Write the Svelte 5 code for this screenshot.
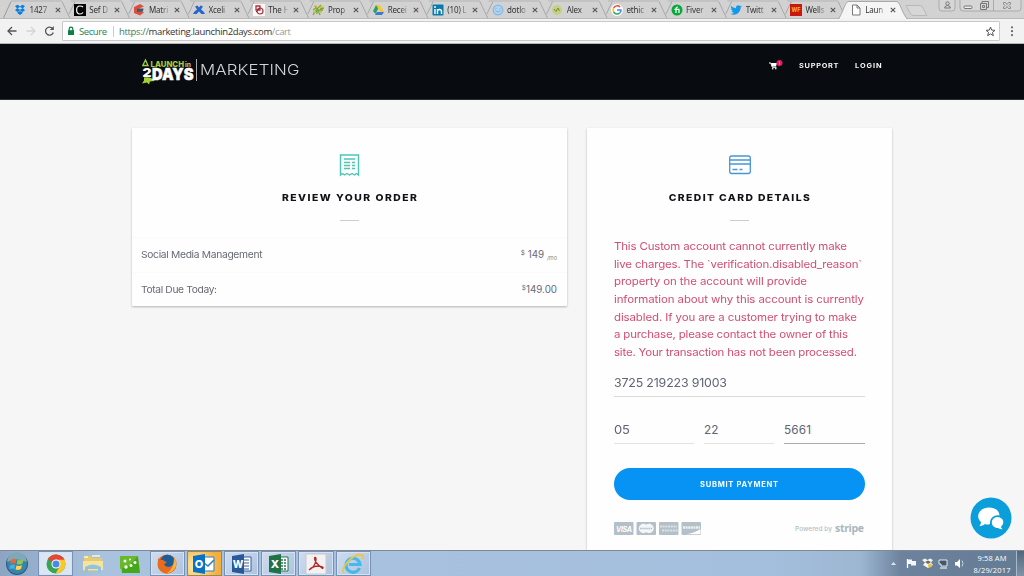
<script>
  const tabs = [
    ['dropbox', '1427'], ['c', 'Sef D'], ['matrix', 'Matri'], ['xcel', 'Xceli'], ['rings', 'The H'],
    ['prop', 'Prop'], ['drive', 'Recei'], ['linkedin', '(10) L'], ['smile', 'dotlo'], ['alex', 'Alex'],
    ['google', 'ethic'], ['fiverr', 'Fiver'], ['twitter', 'Twitt'], ['wells', 'Wells'], ['page', 'Laun']
  ];
  const pitch = 59.7;
  const error = [
    ['This Custom account cannot currently make', 233],
    ['live charges. The `verification.disabled_reason`', 248],
    ['property on the account will provide', 193],
    ['information about why this account is currently', 250],
    ['disabled. If you are a customer trying to make', 243],
    ['a purchase, please contact the owner of this', 234],
    ['site. Your transaction has not been processed.', 243]
  ];
  const apps = ['chrome', 'folder', 'green', 'firefox', 'outlook', 'word', 'excel', 'pdf', 'ie'];

  // Tracks text so that its line takes the given width, with glyphs widened by the stretch factor.
  function fit(node, [width, stretch = 1]) {
    const natural = node.getBoundingClientRect().width;
    const space = (width / stretch - natural) / (node.textContent.length - 1);
    node.style.letterSpacing = space + 'px';
    node.style.marginRight = -space + 'px';
    if (stretch !== 1) node.style.transform = `scaleX(${stretch})`;
  }
</script>

<div class="screen">
  <div class="tabstrip">
    <svg class="shapes" width="1024" height="19">
      <path d="M3 19L11 1.5" stroke="#999" fill="none" />
      {#each tabs.slice(0, 14) as _, i}
        <path d="M{62 + i * pitch} 1.5L{70 + i * pitch} 18.5M{75 + i * pitch} 1.5L{69 + i * pitch} 14" stroke="#a8a8a8" fill="none" />
        <path d="M{11 + i * pitch} 1H{62 + i * pitch}" stroke="#b4b4b4" />
      {/each}
      <path d="M0 18.5H1024" stroke="#b9b9b9" />
      <path d="M838 19C841 18 845 2 848 1.5H897C900 2 904 18 908 19Z" fill="#f5f5f5" stroke="#aaa" />
      <path d="M840 19H906" stroke="#f5f5f5" stroke-width="2" />
      <path d="M906 5.5H920Q922 5.5 923 8L927 15.5H914Q911 15.5 910 13Z" fill="#d7d7d7" stroke="#b8b8b8" />
      <path d="M939 0V8Q939 11 942 11H952Q955 11 955 8V0M960 0V8Q960 11 963 11H1018Q1021 11 1021 8V0M993.5 0V11" fill="#d6d6d6" stroke="#aaa" />
      <g fill="none" stroke="#777">
        <circle cx="947.500" cy="3.500" r="1.700" /><path d="M944.500 8Q945 5.500 947.500 5.500T950.500 8Z" />
        <rect x="964" y="6" width="8" height="2.500" rx="1" fill="#eee" />
        <path d="M982 3.500V1.500H988.500V7.500H986.500M980.500 3.500H986.500V9.500H980.500ZM982.500 5.500H984.500V7.500H982.500Z" />
        <path d="M1003.500 2.500H1005.500L1007 4.500L1008.500 2.500H1010.500V4L1009 5.500L1010.500 7V8.500H1008.500L1007 6.500L1005.500 8.500H1003.500V7L1005 5.500L1003.500 4Z" stroke="#8c8c8c" />
      </g>
    </svg>
    <div class="tabs">
      {#each tabs as [icon, label]}
        <div class="tab">
          <svg class="fav" viewBox="0 0 12 12">
            {#if icon === 'dropbox'}<path d="M1 2L3.700 .7L6 2.500L8.300 .7L11 2L9 4.200L11 6.300L8.300 8L6 6.200L3.700 8L1 6.300L3 4.200ZM3 8.700L6 7L9 8.700L6 11Z" fill="#087ee0" /><path d="M3.500 4.200L6 2.900L8.500 4.200L6 5.700Z" fill="#d5d5d5" />
            {:else if icon === 'c'}<path d="M0 0H12V12H0Z" fill="#050505" /><path d="M9 3Q8 2 6 2C1.500 2 1.500 10 6 10Q8 10 9 8.500" fill="none" stroke="#fff" stroke-width="1.200" />
            {:else if icon === 'matrix'}<path d="M1 3L7 0L11 2.500L5 5L11 8.500L7 11.500L1 9Z" fill="#e04c3e" /><path d="M4 4.500L10.500 4.500L10 7.500L4 8Z" fill="#375f65" />
            {:else if icon === 'xcel'}<path d="M2 2.500L4.500 1.500L6 3.500L7.500 1.500L10 2.500L8 5.500Q11 7 12 10H8.500L6 7.500L3.500 10H0Q1 7 4 5.500Z" fill="#2865cc" />
            {:else if icon === 'rings'}<path d="M0 0H12V12H0Z" fill="#faf7f7" /><path d="M3 2H7V6H3Z" fill="none" stroke="#c12b3b" stroke-width="1.300" /><circle cx="7" cy="7" r="3" fill="none" stroke="#a63447" stroke-width="1.200" /><path d="M3 8L7 4" stroke="#544" />
            {:else if icon === 'prop'}<path d="M1 11L5 5L3 2M5 10V5L9 1M8 11L6 6H11M1 6L4 4M8 5L12 4" fill="none" stroke="#79a83a" stroke-width="1.300" /><path d="M2 2H5M8 3H11M7 8H10M1 8H4" stroke="#dcb830" stroke-width="1.500" />
            {:else if icon === 'drive'}<path d="M4 1H8L3.500 10L1 7Z" fill="#23a566" /><path d="M4 1H8L12 8H8.500Z" fill="#f7c831" /><path d="M3 11L5 8H12L10 11Z" fill="#3b78d8" />
            {:else if icon === 'linkedin'}<rect x=".5" y=".5" width="11" height="11" rx="1" fill="#087bac" /><path d="M3 5V10M3 2V4M5.500 10V5M5.500 7.500Q5.500 5.500 7.500 5.500T9.500 7.500V10" fill="none" stroke="#fff" stroke-width="1.400" />
            {:else if icon === 'smile'}<circle cx="6" cy="6" r="5.500" fill="#8bbce5" /><circle cx="6" cy="6" r="4" fill="#b0d3ef" /><path d="M3.500 6.500Q6 9.500 8.500 6.500M4 4V5M8 4V5" fill="none" stroke="#7fb1dc" />
            {:else if icon === 'alex'}<circle cx="6" cy="6" r="5" fill="#c6d083" /><path d="M3 5L5 7.500L7 4L8.500 7" fill="none" stroke="#7d8a42" />
            {:else if icon === 'google'}<circle cx="6" cy="6" r="6" fill="#fff" /><g fill="none" stroke-width="1.500"><path d="M9 3A4 4 0 0 0 2.600 4" stroke="#e94335" /><path d="M2.600 4A4 4 0 0 0 2.600 8" stroke="#fbbc05" /><path d="M2.600 8A4 4 0 0 0 8.700 9" stroke="#34a853" /><path d="M8.700 9Q10 8 10 6H6" stroke="#4285f4" /></g>
            {:else if icon === 'fiverr'}<circle cx="6" cy="6" r="5.500" fill="#08a83b" /><path d="M5 9V4.500Q5 3 7 3M3.500 5.300H8V9" fill="none" stroke="#fff" stroke-width="1.200" />
            {:else if icon === 'twitter'}<path d="M1 2Q3 4 6 4.300C5.500 1 9 .5 10 2L11.800 1.700L10.700 3.500C10.500 9 5 12.500 .5 9.800Q3 10 4 8.800Q2 8.500 1.800 7H3Q1 6 1 4.500L2 4.800Q.5 3.500 1 2Z" fill="#1499e8" />
            {:else if icon === 'wells'}<path d="M0 0H12V12H0Z" fill="#c9180e" /><text x="6" y="8" text-anchor="middle" font-size="5.500" font-weight="700" fill="#ffb43b">WF</text>
            {:else}<path d="M2.500 1H7L10 4V11H2.500ZM7 1V4H10" fill="#fff" stroke="#777" />{/if}
          </svg>
          <span class="title">{label}</span>
          <svg class="close" viewBox="0 0 6 6"><path d="M.8 .8L5.200 5.200M5.200 .8L.8 5.200" stroke="#555" stroke-width="1.100" /></svg>
        </div>
      {/each}
    </div>
  </div>

  <div class="toolbar">
    <svg width="62" height="24" fill="none">
      <path d="M16.500 12H8.500M12 8L8 12L12 16" stroke="#555" stroke-width="1.300" />
      <path d="M26.500 12H34.500M31 8L35 12L31 16" stroke="#d4d4d4" stroke-width="1.300" />
      <path d="M52.500 9.500A4 4 0 1 0 53.300 13.500" stroke="#555" stroke-width="1.300" /><path d="M53.800 7V11H49.800Z" fill="#555" />
    </svg>
    <div class="address">
      <svg width="8" height="10" viewBox="0 0 8 10"><path d="M2.200 5V3A1.800 1.800 0 0 1 5.800 3V5" fill="none" stroke="#0b8043" stroke-width="1.200" /><rect x="1" y="4.200" width="6" height="4.800" fill="#0b8043" /></svg>
      <span class="secure"><span class="run" use:fit={[28]}>Secure</span></span>
      <i></i>
      <span class="url"><span class="run" use:fit={[172]}><em>https://</em>marketing.launchin2days.com<b>/cart</b></span></span>
      <svg class="star" width="11" height="11" viewBox="0 0 11 11"><path d="M5.500 1L6.700 4.100L10 4.300L7.500 6.400L8.300 9.700L5.500 7.900L2.700 9.700L3.500 6.400L1 4.300L4.300 4.100Z" fill="none" stroke="#555" /></svg>
    </div>
    <svg class="dots" width="24" height="24" fill="#666"><circle cx="12" cy="8.300" r="1.100" /><circle cx="12" cy="12.200" r="1.100" /><circle cx="12" cy="16.100" r="1.100" /></svg>
  </div>

  <header>
    <div class="brand">
      <svg class="mark" width="55" height="28" viewBox="0 0 55 28">
        <path d="M1.500 8L4.500 2L7 7.500H2Z" fill="none" stroke="#a5ce39" stroke-width="1.300" />
        <path d="M3 19.500Q11 18.500 13.500 23L9 23.500L8 26.500L6 24.500L1 25.500L3 22.500Z" fill="#a5ce39" />
        <text x="9.500" y="9" font-size="8" font-weight="800" fill="#a5ce39" textLength="33.500" lengthAdjust="spacingAndGlyphs">LAUNCH</text>
        <text x="44" y="9" font-size="6" font-weight="700" fill="#b8c99b" textLength="6" lengthAdjust="spacingAndGlyphs">in</text>
        <g fill="#fff" font-weight="900"><text x="1.500" y="18.500" font-size="12" textLength="9" lengthAdjust="spacingAndGlyphs">2</text><text x="11" y="22" font-size="16" textLength="41.500" lengthAdjust="spacingAndGlyphs" stroke="#fff" stroke-width=".5">DAYS</text></g>
      </svg>
      <div class="name"><span class="run" use:fit={[99.5, 1.12]}>MARKETING</span></div>
    </div>
    <nav>
      <svg width="14" height="12" viewBox="0 0 14 12"><path d="M0 3H1.800L3.400 7.300H7.500" fill="none" stroke="#fff" /><path d="M2 3H8L7 6.500H3Z" fill="#fff" /><circle cx="3.700" cy="8.800" r=".8" fill="#fff" /><circle cx="6.800" cy="8.800" r=".8" fill="#fff" /><circle cx="10.500" cy="3" r="3" fill="#e61d5d" /><path d="M10.500 1.500V4.500" stroke="#f88bae" stroke-width=".8" /></svg>
      <span class="support"><span class="run" use:fit={[39.5, 1.08]}>SUPPORT</span></span>
      <span class="login"><span class="run" use:fit={[26.5, 1.08]}>LOGIN</span></span>
    </nav>
  </header>

  <main>
    <section class="card order">
      <svg class="glyph" width="24" height="26" viewBox="0 0 24 26" fill="none" stroke="#4bc6b4" stroke-width="1.400"><path d="M2.500 3H20.500V23L18.500 21.500L16.500 23L14 21.500L11.500 23L9 21.500L6.500 23L4.500 21.500L2.500 23Z" /><path d="M6 7H17M6 10.500H12M14 10.500H17M6 13.500H12M14 13.500H17M6 16.500H12M14 16.500H17" stroke-width="1.300" /></svg>
      <h2><span class="run mid" use:fit={[135, 1.08]}>REVIEW YOUR ORDER</span></h2>
      <hr />
      <div class="row first"><span class="run" use:fit={[121.5, 1.08]}>Social Media Management</span><span class="price"><sup>$</sup> 149 <sub>/mo</sub></span></div>
      <div class="row"><span class="run" use:fit={[76, 1.08]}>Total Due Today:</span><span class="price"><sup>$</sup>149.00</span></div>
    </section>

    <section class="card payment">
      <svg class="glyph" width="24" height="26" viewBox="0 0 24 26" fill="none" stroke="#4a97d3" stroke-width="1.300"><rect x="1.700" y="4" width="20.600" height="17.500" rx="2" /><path d="M2 8H22M2 12H22" /><path d="M4.500 17.500H9.500M11.500 17.500H14.500" /></svg>
      <h2><span class="run mid" use:fit={[141, 1.08]}>CREDIT CARD DETAILS</span></h2>
      <hr />
      <p>{#each error as [line, width]}<span class="line"><span class="run" use:fit={[width, 1.06]}>{line}</span></span>{/each}</p>
      <div class="field number"><span class="run" use:fit={[113, 1.05]}>3725 219223 91003</span></div>
      <div class="fields">
        <div class="field"><span class="run" use:fit={[16, 1.1]}>05</span></div>
        <div class="field"><span class="run" use:fit={[14.5]}>22</span></div>
        <div class="field focus"><span class="run" use:fit={[27]}>5661</span></div>
      </div>
      <button><span class="run mid" use:fit={[78, 1.08]}>SUBMIT PAYMENT</span></button>
      <div class="foot">
        <svg width="88" height="14" viewBox="0 0 88 14">
          <g fill="#b4c0c8"><rect width="19.500" height="13" rx="1" /><rect x="22.500" width="19.500" height="13" rx="1" /><rect x="45" width="19.500" height="13" rx="1" /><rect x="67.500" width="19.500" height="13" rx="1" /></g>
          <text x="2" y="9.500" font-size="7" font-weight="700" font-style="italic" fill="#fff" textLength="16">VISA</text>
          <circle cx="29.500" cy="6.500" r="4.700" fill="#f4f6f7" /><circle cx="35" cy="6.500" r="4.700" fill="#f4f6f7" /><path d="M26 6.500H38.500" stroke="#b4c0c8" stroke-width="1.600" stroke-dasharray="1.500 .6" />
          <path d="M46 4.500H63M48 8.500H64" stroke="#dce2e6" stroke-width="2" stroke-dasharray="2 .7" />
          <path d="M69 5.500H86" stroke="#eef1f3" stroke-width="2.300" stroke-dasharray="2 .6" /><path d="M72 12.300Q81 11 86.500 7V12.300Z" fill="#fff" />
        </svg>
        <span class="powered"><span class="run" use:fit={[37]}>Powered by</span></span><span class="stripe"><span class="run" use:fit={[29]}>stripe</span></span>
      </div>
    </section>
  </main>

  <svg class="chat" width="42" height="42" viewBox="0 0 42 42"><circle cx="21" cy="21" r="20.500" fill="#0a9edb" /><path d="M19 10.500C26 10.500 29.500 14.500 29.500 18.500C24 17.500 19.500 21.500 20 27C18 28 16.500 27.500 15 27C13 28.500 11.500 29 9.500 29Q11 27.500 11 25C5 20 9 10.500 19 10.500Z" fill="#fff" /><path d="M27 20C34 20 35 27 31 29.500Q31 31 32.500 32Q30 32.500 28 31C20.500 31 19.500 21 27 20Z" fill="#fff" /></svg>

  <footer>
    <div class="start"><svg width="24" height="24" viewBox="0 0 24 24"><circle cx="12" cy="12" r="11" fill="#285d83" /><circle cx="12" cy="12" r="10" fill="#3c83aa" /><path d="M2 10A10 10 0 0 1 22 10Q12 5 2 10" fill="#7fa8b8" /><path d="M6 8Q9 6 11.300 7.300L10.500 11.500Q8 10.500 5.300 12Z" fill="#f0642d" /><path d="M12.500 7.700Q15 9 18.500 7.500L17.500 11.500Q14 13 11.700 12Z" fill="#92c94b" /><path d="M5 13.500Q7.500 12 10.200 13L9.300 17Q7 16 4.500 17Z" fill="#41b2e9" /><path d="M11.500 13.500Q14 14.500 17 13L16 17Q13 18.500 10.500 17.500Z" fill="#ffd34c" /></svg></div>
    {#each apps as app}
      <div class="app {app}">
        <svg width="22" height="22" viewBox="0 0 22 22">
          {#if app === 'chrome'}<circle cx="11" cy="11" r="9.500" fill="#36a454" /><path d="M11 11L2.800 6.200A9.500 9.500 0 0 1 19.500 6.800Z" fill="#e34737" /><path d="M11 11V6.800H19.500A9.500 9.500 0 0 1 10.500 20.500L15 13Z" fill="#fbc72f" /><circle cx="11" cy="11" r="4.500" fill="#fff" /><circle cx="11" cy="11" r="3.500" fill="#428aee" />
          {:else if app === 'folder'}<path d="M2 3H9L10 5H20V18H2Z" fill="#e4ca72" /><path d="M1 8H21V17H1Z" fill="#f5e59b" /><path d="M2 4H6M10 3H18" stroke="#fff7c8" stroke-width="1.500" /><path d="M3 20V14Q11 9 19 14V20H16V16H6V20Z" fill="#8fc2e5" />
          {:else if app === 'green'}<path d="M1 3H19L21 20H3Z" fill="#45a817" /><path d="M1 3H19L11 12L1 16Z" fill="#66b92a" /><g fill="#fff"><circle cx="6" cy="8" r="1.500" /><circle cx="11" cy="6.500" r="1" /><circle cx="7" cy="14" r="1.700" /><circle cx="12" cy="12.500" r="1.500" /><circle cx="16" cy="9.500" r="1.500" /></g>
          {:else if app === 'firefox'}<circle cx="11" cy="11" r="9.500" fill="#e5641a" /><circle cx="11.500" cy="8.800" r="7" fill="#1c5d99" /><path d="M2 5Q4 8 7 6.500L8 8L11 9L8 11.500Q11 16 17 12L20 7Q22 19 11 20.500Q1 20 2 5Z" fill="#e96b1c" /><path d="M18 5Q22 10 19 15Q16 20 11 20Q18 16 18 5Z" fill="#f9b23b" />
          {:else if app === 'outlook'}<path d="M10 4H21V18H10Z" fill="#fff" stroke="#287bc1" /><path d="M11 10L15 13L21 7" fill="none" stroke="#287bc1" stroke-width="1.500" /><path d="M0 3L12 1V21L0 19Z" fill="#0872c6" /><text x="6" y="15" text-anchor="middle" font-size="11" font-weight="800" fill="#fff">O</text>
          {:else if app === 'word'}<path d="M10 4H20V18H10Z" fill="#fff" stroke="#315e9f" /><path d="M12 7H18M12 10H18M12 13H18M12 16H18" stroke="#315e9f" /><path d="M1 3L13 1V21L1 19Z" fill="#28579a" /><text x="7" y="14.500" text-anchor="middle" font-size="10" font-weight="800" fill="#fff">W</text>
          {:else if app === 'excel'}<path d="M10 4H20V18H10Z" fill="#fff" stroke="#23774a" /><path d="M12 7H18M12 10H18M12 13H18M12 16H18" stroke="#23774a" stroke-width="1.500" stroke-dasharray="3 1" /><path d="M1 3L13 1V21L1 19Z" fill="#1f7246" /><text x="7" y="15" text-anchor="middle" font-size="11" font-weight="800" fill="#fff">X</text>
          {:else if app === 'pdf'}<path d="M1 1H21V21H1Z" fill="#f3f2f2" stroke="#c9c9ce" /><path d="M4 17Q10 14 11 7Q11 3 9.500 5Q9 9 17.500 15.500Q20 14 13 13Q8 13 4 17" fill="none" stroke="#b52b2b" stroke-width="1.300" />
          {:else}<path d="M17.500 15A7 7 0 1 1 18 11.500H7" fill="none" stroke="#48b8e8" stroke-width="3.200" /><path d="M2 20C-3 16 12 -1 20 2Q22 3 20 6" fill="none" stroke="#edc83b" stroke-width="1.700" />{/if}
        </svg>
      </div>
    {/each}
    <svg class="tray" width="80" height="26" viewBox="0 0 80 26">
      <path d="M2 14L4.500 11L7 14Z" fill="#dce8f1" />
      <path d="M18.500 8V17" stroke="#fff" stroke-width="1.300" /><path d="M19 8.500H23V10H27V14.500H22V13H19Z" fill="#f3f6fa" />
      <path d="M33 9L36 7.500L38.500 9L41 7.500L44 9L42 11.500L44 14L39 17L34 14L36 11.500Z" fill="#f3f5ef" /><path d="M36 11L39 9.500L42 11L39 13Z" fill="#686d62" /><circle cx="41" cy="14.500" r="2" fill="#e6c33e" />
      <path d="M50 9H58V15H52V13H50Z" fill="#43566c" stroke="#e4e9ee" /><path d="M51 17H58" stroke="#fff" />
      <path d="M66 11H68L71 8V17L68 14.500H66Z" fill="#fff" /><path d="M73 9.500Q75 12.500 73 15.500" fill="none" stroke="#c7d2df" />
    </svg>
    <div class="clock"><span><span class="run" use:fit={[29]}>9:58 AM</span></span><span><span class="run" use:fit={[37]}>8/29/2017</span></span></div>
    <div class="peek"></div>
  </footer>
</div>

<style>
  :global(body) { margin: 0; overflow: hidden; }
  * { box-sizing: border-box; }
  .screen { width: 1024px; height: 576px; position: relative; display: flex; flex-direction: column; overflow: hidden; background: #f6f6f6; font-family: Inter, "Liberation Sans", sans-serif; }
  .screen > * { flex-shrink: 0; }
  .run { display: inline-block; white-space: pre; transform-origin: left; }
  .mid { transform-origin: center; }
  .tabstrip { height: 19px; background: #d2d2d2; position: relative; }
  .shapes { position: absolute; inset: 0; }
  .tabs { position: relative; display: flex; padding-left: 14px; height: 19px; }
  .tab { width: 59.7px; display: flex; align-items: center; flex-shrink: 0; padding-top: 1px; }
  .fav { width: 12px; height: 12px; margin-right: 3.500px; flex: none; }
  .title { width: 20px; overflow: hidden; white-space: nowrap; font: 8px/12px "Noto Sans", "Open Sans", sans-serif; letter-spacing: -.15px; color: #333; margin-top: -1px; -webkit-mask-image: linear-gradient(90deg, #000 60%, #0003); mask-image: linear-gradient(90deg, #000 60%, #0003); }
  .close { width: 6px; height: 6px; margin-left: 5px; flex: none; }
  .toolbar { height: 25px; background: #f2f2f2; border-bottom: 1px solid #b6b6b6; display: flex; align-items: flex-start; }
  .address { width: 938px; height: 20px; margin-top: 2px; background: #fff; border: 1px solid #c9c9c9; border-radius: 1px; display: flex; align-items: center; padding: 0 4px; font: 9.500px "Open Sans", sans-serif; }
  .secure { color: #208554; margin-left: 4px; width: 28px; }
  .address i { width: 1px; height: 11px; background: #ccc; margin: 0 5px 0 6px; }
  .url { color: #333; }
  .url em { color: #417b59; font-style: normal; }
  .url b { color: #999; font-weight: 400; }
  .star { margin-left: auto; margin-right: -1px; }
  header { height: 56px; background: #080c11; border-bottom: 1px solid #2b2e33; display: flex; align-items: flex-start; justify-content: space-between; padding: 0 143px 0 141px; }
  .brand { display: flex; padding-top: 14px; }
  .name { height: 22px; width: 105px; margin-top: 1px; padding-left: 3px; border-left: 1px solid #aaa; color: #d2d5d7; font-size: 15px; line-height: 22px; font-weight: 300; }
  nav { display: flex; align-items: center; padding-top: 14px; height: 29px; color: #f5f5f5; font-size: 6.800px; font-weight: 700; }
  .support { margin-left: 16px; width: 39.500px; }
  .login { margin-left: 16.500px; width: 26.500px; }
  main { display: flex; align-items: flex-start; gap: 20px; padding: 28px 0 0 132px; height: 450px; }
  .card { background: #fefefe; box-shadow: 0 1px 2px #0004; display: flex; flex-direction: column; align-items: center; }
  .order { width: 435px; height: 178px; }
  .payment { width: 305px; height: 460px; padding: 0 27px; }
  .glyph { margin-top: 24px; flex: none; }
  h2 { margin: 11px 0 0; height: 16px; line-height: 17px; font-size: 9.600px; font-weight: 800; color: #101217; }
  h2, hr { position: relative; left: -.5px; }
  hr { width: 19px; border: 0; height: 1px; background: #ccc; margin: 15px 0 0; flex: none; }
  .row { width: 100%; height: 35px; display: flex; justify-content: space-between; align-items: center; padding: 0 10px 0 9px; font-size: 9.500px; color: #686b75; font-weight: 400; border-top: 1px solid #fafafa; }
  .first { margin-top: 16px; }
  .price { white-space: nowrap; font-size: 9.800px; }
  .row sup { font-size: 6.500px; line-height: 0; vertical-align: 3px; }
  .row sub { font-size: 5.500px; line-height: 0; vertical-align: -2px; color: #888; }
  p { width: 251px; margin: 17px 0 0; color: #d24d72; font-size: 10.800px; line-height: 17.650px; }
  .line { display: block; height: 17.650px; }
  .field { border-bottom: 1px solid #dadadd; height: 31px; line-height: 35px; font-size: 11.800px; color: #616475; }
  .number { width: 251px; height: 36px; line-height: 27px; padding-top: 9px; }
  .fields { width: 251px; display: grid; grid-template-columns: 80px 70px 81px; gap: 10px; margin-top: 16px; }
  .fields .field { border-color: #e7dfe1; }
  .fields .field.focus { border-color: #a8abb1; }
  button { width: 251px; height: 32px; flex: none; margin-top: 24px; border: 0; border-radius: 16px; background: #0693f4; color: #fff; font: 700 7px Inter, sans-serif; }
  .foot { width: 251px; display: flex; align-items: center; margin-top: 21px; height: 16px; color: #b5bec6; }
  .powered { margin-left: auto; margin-right: 3px; font-size: 6.500px; font-weight: 500; }
  .stripe { width: 30px; font: 700 10.500px "Open Sans", sans-serif; color: #aab5bd; margin-top: -2px; }
  .chat { position: absolute; left: 970px; top: 497px; }
  footer { height: 26px; position: relative; z-index: 1; background: linear-gradient(90deg, #8da5c2, #a9c2de 10%, #a4bfdd 75%, #9db7d2 84%, #6d839d 88%, #647b94); border-top: 1px solid #7e8998; display: flex; align-items: center; }
  .start { width: 36px; display: flex; padding-left: 5px; }
  .app { width: 35.200px; height: 25px; margin-left: 2px; display: flex; align-items: center; justify-content: center; border: 1px solid transparent; }
  .chrome, .firefox, .word, .excel, .pdf, .ie { border-color: #7892b5; background: linear-gradient(135deg, #d0dcee, #adc3df); box-shadow: inset 0 0 0 1px #d6e2f1; }
  .chrome { background: #dce5f2; }
  .outlook { border-color: #a08653; background: radial-gradient(circle at 25% 60%, #fff0b4, #f2ae3e 80%); }
  .tray { margin-left: auto; }
  .clock { width: 42px; margin-left: 2px; margin-right: 3px; display: flex; flex-direction: column; align-items: center; font: 7.500px/12px "Open Sans", sans-serif; color: #fff; }
  .clock > span { display: block; height: 12px; }
  .peek { width: 8px; height: 26px; background: linear-gradient(#52677e, #8294a9); border-left: 1px solid #a9b9ca; }
</style>
